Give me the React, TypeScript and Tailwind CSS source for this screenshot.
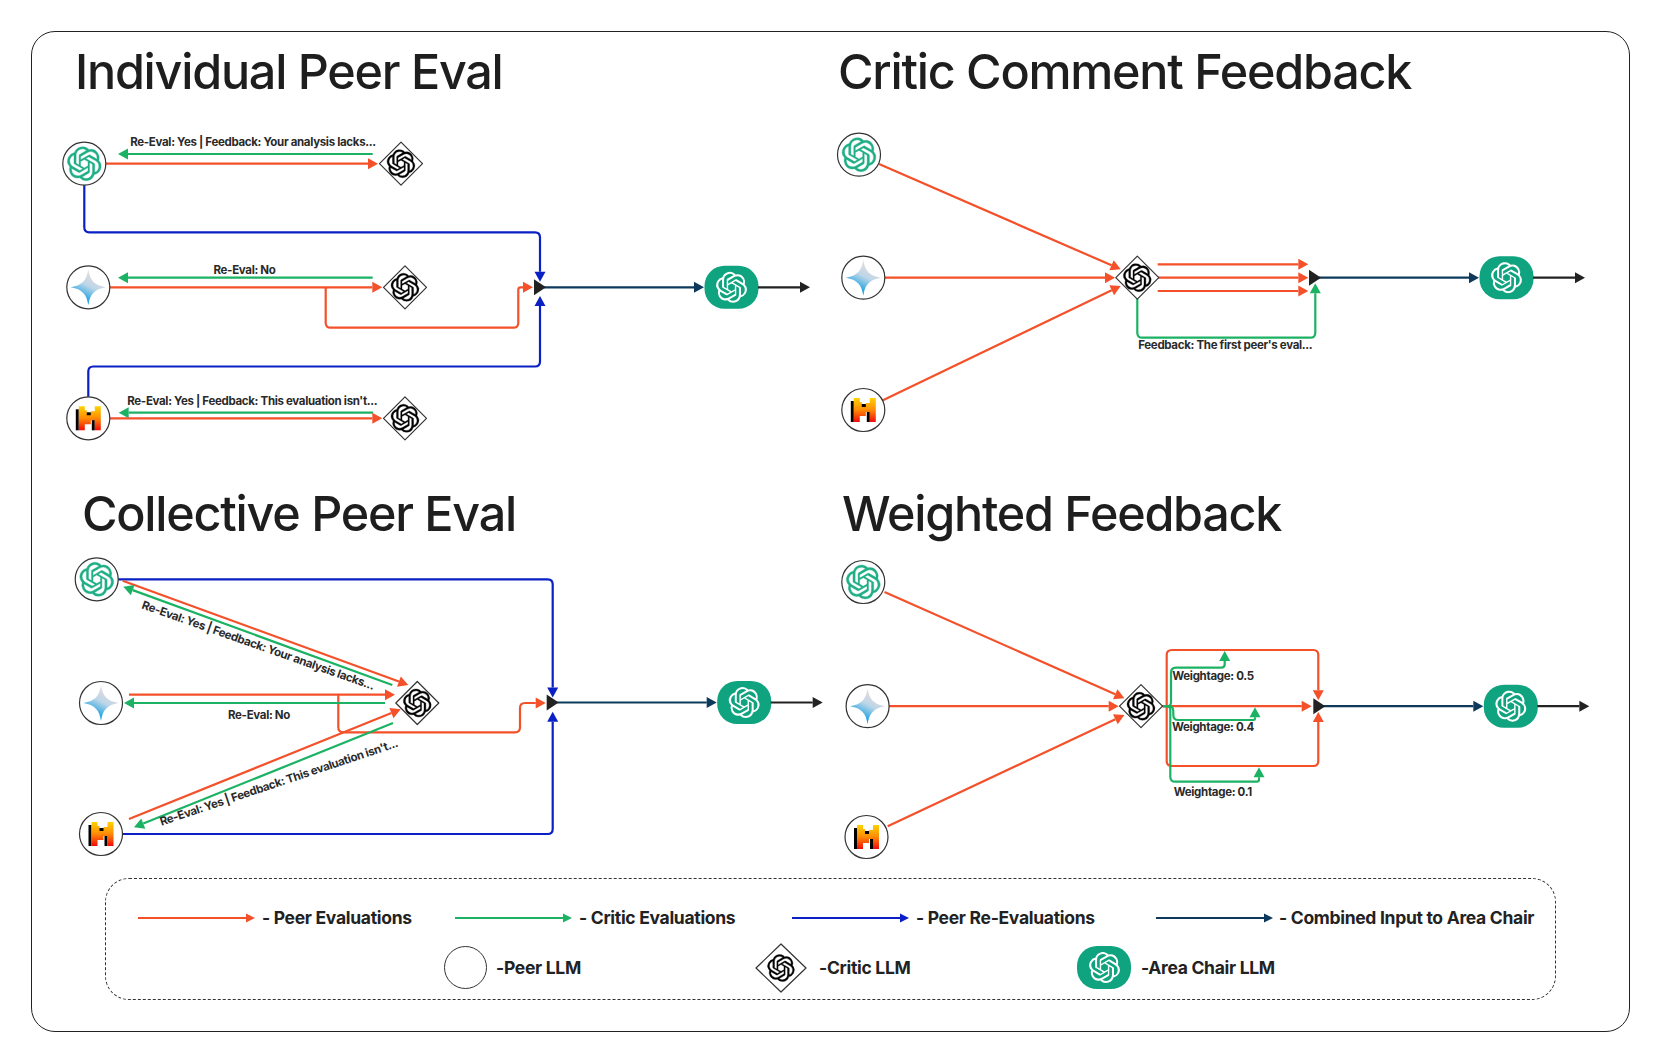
import React from 'react';

type Pt = [number, number];

const ORANGE = '#f4512a';
const GREEN = '#1cb264';
const BLUE = '#0a20c4';
const NAVY = '#0d3a5c';
const INK = '#222222';
const TEAL = '#0fa47f';

const OPENAI =
  'M22.2819 9.8211a5.9847 5.9847 0 0 0-.5157-4.9108 6.0462 6.0462 0 0 0-6.5098-2.9A6.0651 6.0651 0 0 0 4.9807 4.1818a5.9847 5.9847 0 0 0-3.9977 2.9 6.0462 6.0462 0 0 0 .7427 7.0966 5.98 5.98 0 0 0 .511 4.9107 6.051 6.051 0 0 0 6.5146 2.9001A5.9847 5.9847 0 0 0 13.2599 24a6.0557 6.0557 0 0 0 5.7718-4.2058 5.9894 5.9894 0 0 0 3.9977-2.9001 6.0557 6.0557 0 0 0-.7475-7.0729zm-9.022 12.6081a4.4755 4.4755 0 0 1-2.8764-1.0408l.1419-.0804 4.7783-2.7582a.7948.7948 0 0 0 .3927-.6813v-6.7369l2.02 1.1686a.071.071 0 0 1 .038.052v5.5826a4.504 4.504 0 0 1-4.4945 4.4944zm-9.6607-4.1254a4.4708 4.4708 0 0 1-.5346-3.0137l.142.0852 4.783 2.7582a.7712.7712 0 0 0 .7806 0l5.8428-3.3685v2.3324a.0804.0804 0 0 1-.0332.0615L9.74 19.9502a4.4992 4.4992 0 0 1-6.1408-1.6464zM2.3408 7.8956a4.485 4.485 0 0 1 2.3655-1.9728V11.6a.7664.7664 0 0 0 .3879.6765l5.8144 3.3543-2.0201 1.1685a.0757.0757 0 0 1-.071 0l-4.8303-2.7865A4.504 4.504 0 0 1 2.3408 7.872zm16.5963 3.8558L13.1038 8.364 15.1192 7.2a.0757.0757 0 0 1 .071 0l4.8303 2.7913a4.4944 4.4944 0 0 1-.6765 8.1042v-5.6772a.79.79 0 0 0-.407-.667zm2.0107-3.0231l-.142-.0852-4.7735-2.7818a.7759.7759 0 0 0-.7854 0L9.409 9.2297V6.8974a.0662.0662 0 0 1 .0284-.0615l4.8303-2.7866a4.4992 4.4992 0 0 1 6.6802 4.66zM8.3065 12.863l-2.02-1.1638a.0804.0804 0 0 1-.038-.0567V6.0742a4.4992 4.4992 0 0 1 7.3757-3.4537l-.142.0805L8.704 5.459a.7948.7948 0 0 0-.3927.6813zm1.0976-2.3654l2.602-1.4998 2.6069 1.4998v2.9994l-2.5974 1.4997-2.6067-1.4997Z';

// rounded polyline through the points
function roundedPath(pts: Pt[], r: number) {
  let d = `M${pts[0][0]} ${pts[0][1]}`;
  for (let i = 1; i < pts.length - 1; i++) {
    const [px, py] = pts[i - 1];
    const [cx, cy] = pts[i];
    const [nx, ny] = pts[i + 1];
    const l1 = Math.hypot(cx - px, cy - py);
    const l2 = Math.hypot(nx - cx, ny - cy);
    const rr = Math.min(r, l1 / 2, l2 / 2);
    const ax = cx - ((cx - px) / l1) * rr;
    const ay = cy - ((cy - py) / l1) * rr;
    const bx = cx + ((nx - cx) / l2) * rr;
    const by = cy + ((ny - cy) / l2) * rr;
    d += ` L${ax} ${ay} Q${cx} ${cy} ${bx} ${by}`;
  }
  const last = pts[pts.length - 1];
  return `${d} L${last[0]} ${last[1]}`;
}

const Wire = ({ pts, color, r = 5, head = 10, half = 5.5, width = 2.2 }: { pts: Pt[]; color: string; r?: number; head?: number; half?: number; width?: number }) => {
  const tip = pts[pts.length - 1];
  const prev = pts[pts.length - 2];
  const len = Math.hypot(tip[0] - prev[0], tip[1] - prev[1]);
  const ux = (tip[0] - prev[0]) / len;
  const uy = (tip[1] - prev[1]) / len;
  const base: Pt = [tip[0] - ux * head, tip[1] - uy * head];
  const body = [...pts.slice(0, -1), base];
  const corners = [
    `${tip[0]},${tip[1]}`,
    `${base[0] - uy * half},${base[1] + ux * half}`,
    `${base[0] + uy * half},${base[1] - ux * half}`,
  ].join(' ');
  return (
    <g>
      <path d={roundedPath(body, r)} fill="none" stroke={color} strokeWidth={width} />
      <polygon points={corners} fill={color} />
    </g>
  );
};

const Knot = ({ cx, cy, size, color, bold = 0 }: { cx: number; cy: number; size: number; color: string; bold?: number }) => (
  <svg x={cx - size / 2} y={cy - size / 2} width={size} height={size} viewBox="0 0 24 24" className="overflow-visible">
    <path d={OPENAI} fill={color} stroke={color} strokeWidth={bold} />
  </svg>
);

const Star = ({ cx, cy }: { cx: number; cy: number }) => (
  <path
    transform={`translate(${cx} ${cy})`}
    d="M0 -18 C1.6 -7 6 -2 17.5 0 C6 2 1.6 7 0 18 C-1.6 7 -6 2 -17.5 0 C-6 -2 -1.6 -7 0 -18Z"
    fill="url(#gem-grad)"
  />
);

const Mistral = ({ cx, cy }: { cx: number; cy: number }) => (
  <g transform={`translate(${cx - 12.5} ${cy - 12})`}>
    <rect x="0" y="3" width="3" height="21" fill="#000" />
    <rect x="16" y="9" width="3" height="15" fill="#000" />
    <rect x="10" y="6" width="6" height="5" fill="#000" />
    <path d="M3 0H9V4H11V9H15V5H19V0H25V24H19V14H15V18H9V24H3Z" fill="url(#mis-grad)" />
  </g>
);

const Peer = ({ cx, cy, kind }: { cx: number; cy: number; kind: 'gpt' | 'gem' | 'mis' }) => (
  <g>
    <circle cx={cx} cy={cy} r={21.5} fill="#fff" stroke="#333" strokeWidth={1.2} />
    {kind === 'gpt' && <Knot cx={cx} cy={cy} size={34} color="#1fae85" bold={0.25} />}
    {kind === 'gem' && <Star cx={cx} cy={cy} />}
    {kind === 'mis' && <Mistral cx={cx} cy={cy} />}
  </g>
);

const Critic = ({ cx, cy }: { cx: number; cy: number }) => (
  <g>
    <polygon
      points={`${cx},${cy - 21.5} ${cx + 21.5},${cy} ${cx},${cy + 21.5} ${cx - 21.5},${cy}`}
      fill="#fff"
      stroke="#333"
      strokeWidth={1.2}
      strokeLinejoin="round"
    />
    <Knot cx={cx} cy={cy} size={28} color="#000" bold={0.3} />
  </g>
);

// junction triangle, navy feed, area chair, and the output arrow
const Output = ({ x, y }: { x: number; y: number }) => (
  <g>
    <Wire pts={[[x + 10, y], [x + 170, y]]} color={NAVY} />
    <polygon points={`${x},${y - 8} ${x + 12},${y} ${x},${y + 8}`} fill={INK} />
    <rect x={x + 170.5} y={y - 21.5} width={54} height={43} rx={20} fill={TEAL} />
    <Knot cx={x + 197.5} cy={y} size={31} color="#fff" />
    <Wire pts={[[x + 224, y], [x + 276, y]]} color={INK} />
  </g>
);

const Label = ({ x, y, rotate = 0, children }: { x: number; y: number; rotate?: number; children: React.ReactNode }) => (
  <span
    className="absolute whitespace-nowrap text-[11.5px] leading-none font-bold tracking-[-0.32px] text-[#2a2a2a]"
    style={{ left: x, top: y, transform: `translate(-50%, -50%) rotate(${rotate}deg)` }}
  >
    {children}
  </span>
);

const Panel = ({
  ox,
  oy,
  h,
  title,
  titleClass,
  labels,
  children,
}: {
  ox: number;
  oy: number;
  h: number;
  title: string;
  titleClass: string;
  labels: { x: number; y: number; rotate?: number; text: string }[];
  children: React.ReactNode;
}) => (
  <section className="relative">
    <h2 className={`text-[48.5px] leading-none font-medium tracking-[-1.25px] text-[#1e1e1e] ${titleClass}`}>{title}</h2>
    <svg className="absolute inset-0 overflow-visible" width={799} height={h} viewBox={`${ox} ${oy} 799 ${h}`}>
      {children}
    </svg>
    {labels.map((l) => (
      <Label key={l.text + l.x} x={l.x - ox} y={l.y - oy} rotate={l.rotate}>
        {l.text}
      </Label>
    ))}
  </section>
);

const LegendArrow = ({ color, className }: { color: string; className?: string }) => (
  <svg className={className} width={117} height={12} viewBox="0 0 117 12">
    <Wire pts={[[0, 6], [117, 6]]} color={color} head={9} half={4.5} />
  </svg>
);

export default function App() {
  return (
    <div className="min-h-screen bg-white pt-[31px] pl-[31px] font-['Inter','Liberation_Sans',sans-serif]">
      <svg className="absolute h-0 w-0">
        <defs>
          <linearGradient id="gem-grad" x1="0.75" y1="0.08" x2="0.35" y2="0.88">
            <stop offset="0" stopColor="#f0dcd8" />
            <stop offset="0.5" stopColor="#bcd6e8" />
            <stop offset="1" stopColor="#0a9be0" />
          </linearGradient>
          <linearGradient id="mis-grad" x1="0" y1="0" x2="0" y2="1">
            <stop offset="0" stopColor="#ffd200" />
            <stop offset="0.5" stopColor="#ff8a05" />
            <stop offset="1" stopColor="#f10a0a" />
          </linearGradient>
        </defs>
      </svg>

      <div className="h-[1001px] w-[1599px] rounded-[24px] border border-[#222]">
        <div className="grid grid-cols-[799px_798px] grid-rows-[438px_400px]">
          <Panel
            ox={32}
            oy={32}
            h={438}
            title="Individual Peer Eval"
            titleClass="pt-[16px] pl-[43px]"
            labels={[
              { x: 253, y: 143, text: 'Re-Eval: Yes | Feedback: Your analysis lacks...' },
              { x: 244.5, y: 270.5, text: 'Re-Eval: No' },
              { x: 252.3, y: 401.8, text: "Re-Eval: Yes | Feedback: This evaluation isn't..." },
            ]}
          >
            <Wire pts={[[84.3, 185], [84.3, 232.3], [540, 232.3], [540, 281.7]]} color={BLUE} />
            <Wire pts={[[88.3, 397], [88.3, 366.5], [540, 366.5], [540, 296]]} color={BLUE} />
            <Wire pts={[[325.7, 287.3], [325.7, 327.7], [518.3, 327.7], [518.3, 287.3], [533, 287.3]]} color={ORANGE} />
            <Wire pts={[[372.7, 154], [118, 154]]} color={GREEN} />
            <Wire pts={[[106, 163.7], [378, 163.7]]} color={ORANGE} />
            <Wire pts={[[372.7, 277.7], [118, 277.7]]} color={GREEN} />
            <Wire pts={[[110, 287.3], [382.3, 287.3]]} color={ORANGE} />
            <Wire pts={[[373, 412.7], [118.7, 412.7]]} color={GREEN} />
            <Wire pts={[[110, 418.3], [382.3, 418.3]]} color={ORANGE} />
            <Peer cx={84.3} cy={163.7} kind="gpt" />
            <Peer cx={88.3} cy={287.3} kind="gem" />
            <Peer cx={88.3} cy={418.3} kind="mis" />
            <Critic cx={401} cy={163.7} />
            <Critic cx={405} cy={287.3} />
            <Critic cx={405} cy={418.3} />
            <Output x={534} y={287.3} />
          </Panel>

          <Panel
            ox={831}
            oy={32}
            h={438}
            title="Critic Comment Feedback"
            titleClass="pt-[16px] pl-[7px]"
            labels={[{ x: 1225.3, y: 345.7, text: "Feedback: The first peer's eval..." }]}
          >
            <Wire pts={[[879, 164], [1120.7, 269.3]]} color={ORANGE} />
            <Wire pts={[[884, 277.7], [1115, 277.7]]} color={ORANGE} />
            <Wire pts={[[882.4, 400.4], [1120.7, 286]]} color={ORANGE} />
            <Wire pts={[[1157.7, 264.3], [1308.3, 264.3]]} color={ORANGE} />
            <Wire pts={[[1157.7, 277.7], [1308.3, 277.7]]} color={ORANGE} />
            <Wire pts={[[1157.7, 291], [1308.3, 291]]} color={ORANGE} />
            <Wire pts={[[1137.3, 299], [1137.3, 337.7], [1315.3, 337.7], [1315.3, 283.3]]} color={GREEN} />
            <Peer cx={859} cy={154.7} kind="gpt" />
            <Peer cx={863.3} cy={277.7} kind="gem" />
            <Peer cx={863.3} cy={410} kind="mis" />
            <Critic cx={1137.3} cy={277.7} />
            <Output x={1309} y={277.7} />
          </Panel>

          <Panel
            ox={32}
            oy={470}
            h={400}
            title="Collective Peer Eval"
            titleClass="pt-[20px] pl-[50px]"
            labels={[
              { x: 258.3, y: 646, rotate: 19.4, text: 'Re-Eval: Yes | Feedback: Your analysis lacks...' },
              { x: 259, y: 715.7, text: 'Re-Eval: No' },
              { x: 278.7, y: 783.3, rotate: -18.5, text: "Re-Eval: Yes | Feedback: This evaluation isn't..." },
            ]}
          >
            <Wire pts={[[118, 579.3], [552.7, 579.3], [552.7, 697.4]]} color={BLUE} />
            <Wire pts={[[122, 834], [552.7, 834], [552.7, 711.7]]} color={BLUE} />
            <Wire pts={[[338.3, 694.7], [338.3, 732.3], [520, 732.3], [520, 703], [545.7, 703]]} color={ORANGE} />
            <Wire pts={[[122.7, 580.7], [408.3, 685]]} color={ORANGE} />
            <Wire pts={[[392.3, 685], [123.3, 586.7]]} color={GREEN} />
            <Wire pts={[[129, 694.7], [395, 694.7]]} color={ORANGE} />
            <Wire pts={[[385, 703], [124, 703]]} color={GREEN} />
            <Wire pts={[[129, 819], [400.7, 709.3]]} color={ORANGE} />
            <Wire pts={[[393, 723], [134, 827.3]]} color={GREEN} />
            <Peer cx={96.7} cy={579.3} kind="gpt" />
            <Peer cx={101} cy={703} kind="gem" />
            <Peer cx={101} cy={834} kind="mis" />
            <Critic cx={417.3} cy={703} />
            <Output x={546.7} y={702.5} />
          </Panel>

          <Panel
            ox={831}
            oy={470}
            h={400}
            title="Weighted Feedback"
            titleClass="pt-[20px] pl-[11px]"
            labels={[
              { x: 1213, y: 676.7, text: 'Weightage: 0.5' },
              { x: 1213, y: 727.7, text: 'Weightage: 0.4' },
              { x: 1212.8, y: 793.3, text: 'Weightage: 0.1' },
            ]}
          >
            <Wire pts={[[884.5, 592], [1124.4, 698.3]]} color={ORANGE} />
            <Wire pts={[[888, 706.2], [1118.7, 706.2]]} color={ORANGE} />
            <Wire pts={[[887.7, 826.3], [1124.4, 715]]} color={ORANGE} />
            <Wire pts={[[1162, 706.2], [1311.7, 706.2]]} color={ORANGE} />
            <Wire pts={[[1166.7, 706.2], [1166.7, 650], [1318.3, 650], [1318.3, 700.2]]} color={ORANGE} />
            <Wire pts={[[1166.7, 706.2], [1166.7, 766], [1318.3, 766], [1318.3, 712]]} color={ORANGE} />
            <Wire pts={[[1163, 706.2], [1171, 706.2], [1171, 667.7], [1224.7, 667.7], [1224.7, 651]]} color={GREEN} />
            <Wire pts={[[1163, 706.2], [1173.3, 706.2], [1173.3, 720], [1255, 720], [1255, 707.3]]} color={GREEN} />
            <Wire pts={[[1163, 706.2], [1170.3, 706.2], [1170.3, 781.7], [1259, 781.7], [1259, 767.3]]} color={GREEN} />
            <Peer cx={863.3} cy={582} kind="gpt" />
            <Peer cx={867.6} cy={706.2} kind="gem" />
            <Peer cx={866.5} cy={837} kind="mis" />
            <Critic cx={1141} cy={706.2} />
            <Output x={1313.3} y={706.2} />
          </Panel>
        </div>

        {/* legend */}
        <div className="mt-[7.5px] ml-[73px] flex h-[122px] w-[1451px] flex-col gap-[11px] rounded-[24px] border border-dashed border-[#333] pt-[25px] text-[17.5px] leading-none font-bold text-[#222]">
          <div className="flex h-[28px] items-center pl-[32px] tracking-[-0.3px]">
            <LegendArrow color={ORANGE} />
            <span className="ml-[7px] w-[153px] whitespace-nowrap">- Peer Evaluations</span>
            <LegendArrow color={GREEN} className="ml-[40px]" />
            <span className="ml-[7px] w-[161px] whitespace-nowrap">- Critic Evaluations</span>
            <LegendArrow color={BLUE} className="ml-[52px]" />
            <span className="ml-[7px] w-[183px] whitespace-nowrap">- Peer Re-Evaluations</span>
            <LegendArrow color={NAVY} className="ml-[57px]" />
            <span className="ml-[6px] whitespace-nowrap">- Combined Input to Area Chair</span>
          </div>
          <div className="flex h-[50px] items-center pl-[338px] tracking-[-0.3px]">
            <div className="h-[43px] w-[43px] rounded-full border border-[#333]" />
            <span className="ml-[9px] w-[87px] whitespace-nowrap">-Peer LLM</span>
            <svg className="ml-[172px]" width={52} height={50} viewBox="0 0 52 50">
              <polygon points="26,1 51,25 26,49 1,25" fill="#fff" stroke="#333" strokeWidth={1.2} strokeLinejoin="round" />
              <Knot cx={26} cy={25} size={27} color="#000" bold={0.3} />
            </svg>
            <span className="ml-[12px] w-[93px] whitespace-nowrap">-Critic LLM</span>
            <div className="ml-[165px] flex h-[43px] w-[54px] items-center justify-center rounded-[20px] bg-[#0fa47f]">
              <svg width={31} height={31} viewBox="0 0 24 24">
                <path d={OPENAI} fill="#fff" />
              </svg>
            </div>
            <span className="ml-[10px] whitespace-nowrap">-Area Chair LLM</span>
          </div>
        </div>
      </div>
    </div>
  );
}
